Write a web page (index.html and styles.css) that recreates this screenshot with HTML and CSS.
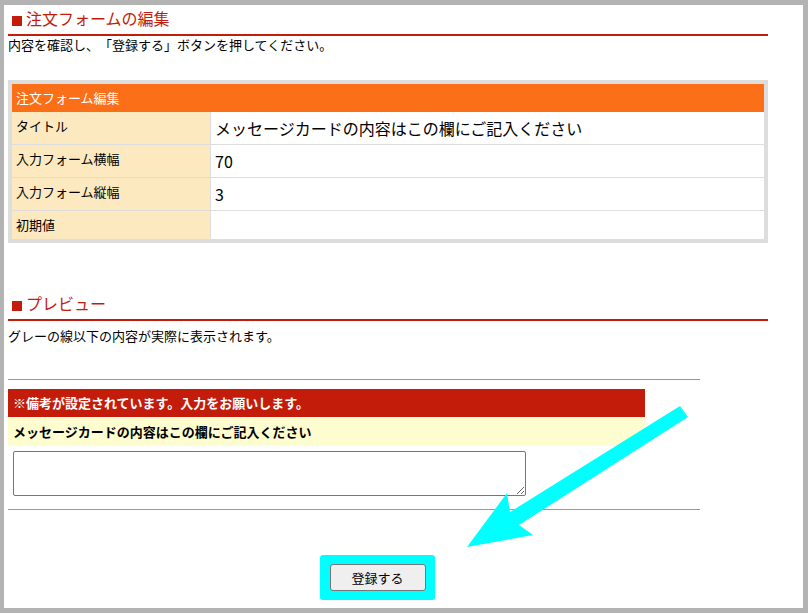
FILE: index.html
```html
<!DOCTYPE html>
<html lang="ja">
<head>
    <meta charset="UTF-8">
    <meta name="viewport" content="width=device-width, initial-scale=1.0">
    <title>注文フォームの編集</title>
    <link rel="stylesheet" href="styles.css">
</head>
<body>
    <div class="frame">
        <div class="content">
            <h2 class="heading">注文フォームの編集</h2>
            <p class="note">内容を確認し、「登録する」ボタンを押してください。</p>

            <table class="edit-table">
                <tr>
                    <th colspan="2">注文フォーム編集</th>
                </tr>
                <tr class="first">
                    <td class="label">タイトル</td>
                    <td class="value">メッセージカードの内容はこの欄にご記入ください</td>
                </tr>
                <tr>
                    <td class="label">入力フォーム横幅</td>
                    <td class="value">70</td>
                </tr>
                <tr>
                    <td class="label">入力フォーム縦幅</td>
                    <td class="value">3</td>
                </tr>
                <tr>
                    <td class="label">初期値</td>
                    <td class="value"></td>
                </tr>
            </table>

            <h2 class="heading preview-heading">プレビュー</h2>
            <p class="note preview-note">グレーの線以下の内容が実際に表示されます。</p>

            <!-- Preview of the order form -->
            <div class="preview">
                <div class="remark">※備考が設定されています。入力をお願いします。</div>
                <div class="field-label">メッセージカードの内容はこの欄にご記入ください</div>
                <div class="field">
                    <textarea rows="3" cols="70"></textarea>
                </div>
            </div>

            <div class="submit">
                <span class="highlight"><button class="btn">登録する</button></span>
            </div>
        </div>
    </div>

    <!-- Annotation arrow -->
    <svg class="arrow" width="808" height="613" viewBox="0 0 808 613">
        <polygon points="680,406 688,417 519,525 533,535 467,547 507,493 510,512" fill="#00ffff"/>
    </svg>
</body>
</html>
```

FILE: styles.css
```css
html {
    background: #b3b3b3;
}
body {
    font-family: "Noto Sans CJK JP", "Noto Sans", sans-serif;
    font-size: 13px;
    color: #000;
    margin: 0;
    position: relative;
    text-spacing-trim: space-all;
}
.frame {
    box-sizing: border-box;
    width: 808px;
    height: 613px;
    background: #fff;
    border-style: solid;
    border-color: #b3b3b3;
    border-width: 5px 5px 5px 4px;
}
.content {
    width: 760px;
    padding-left: 4px;
}
.heading {
    margin: 0;
    padding: 0 0 3px 4px;
    font-size: 16px;
    font-weight: normal;
    line-height: 26px;
    color: #c41c0b;
    border-bottom: 2px solid #c41c0b;
}
.heading::before {
    content: "";
    display: inline-block;
    width: 10px;
    height: 10px;
    margin-right: 4px;
    background: #c41c0b;
    vertical-align: -1px;
}
.note {
    margin: 0;
    line-height: 18px;
}
.edit-table {
    box-sizing: border-box;
    width: 760px;
    margin-top: 26px;
    border: 4px solid #ddd;
    border-collapse: separate;
    border-spacing: 0;
}
.edit-table th {
    background: #fa6f18;
    color: #fff;
    font-weight: normal;
    text-align: left;
    padding: 5px 4px;
    line-height: 18px;
}
.edit-table td {
    padding: 5px 4px;
    vertical-align: top;
    border-top: 1px solid #ddd;
}
.edit-table tr.first td {
    border-top: none;
}
.edit-table .label {
    width: 190px;
    background: #fde9c0;
    line-height: 18px;
    border-right: 1px solid #ddd;
}
.edit-table .value {
    font-size: 16px;
    line-height: 22px;
}
.preview-heading {
    margin-top: 47px;
}
.preview-note {
    margin-top: 6px;
}
.preview {
    width: 692px;
    margin-top: 34px;
    padding: 9px 0 13px;
    border-top: 1px solid #999;
    border-bottom: 1px solid #999;
}
.remark {
    width: 627px;
    padding: 5px;
    line-height: 18px;
    background: #c41c0b;
    color: #fff;
    font-weight: bold;
}
.field-label {
    width: 627px;
    padding: 5px;
    line-height: 19px;
    background: #fdfdcf;
    font-weight: bold;
}
.field {
    padding: 5px 0 0 5px;
}
.field textarea {
    display: block;
    box-sizing: border-box;
    width: 513px;
    height: 45px;
    border: 1px solid #767676;
    border-radius: 2px;
    font-family: inherit;
}
.submit {
    width: 738px;
    margin-top: 45px;
    text-align: center;
}
.highlight {
    display: inline-block;
    padding: 9px 9px 9px 10px;
    background: #00ffff;
    border-radius: 3px;
    line-height: 0;
}
.btn {
    box-sizing: border-box;
    width: 96px;
    height: 27px;
    padding: 0;
    font-family: inherit;
    font-size: 13px;
    line-height: 25px;
    color: #000;
    background: #efefef;
    border: 1px solid #767676;
    border-radius: 3px;
}
.arrow {
    position: absolute;
    top: 0;
    left: 0;
    pointer-events: none;
}
```
